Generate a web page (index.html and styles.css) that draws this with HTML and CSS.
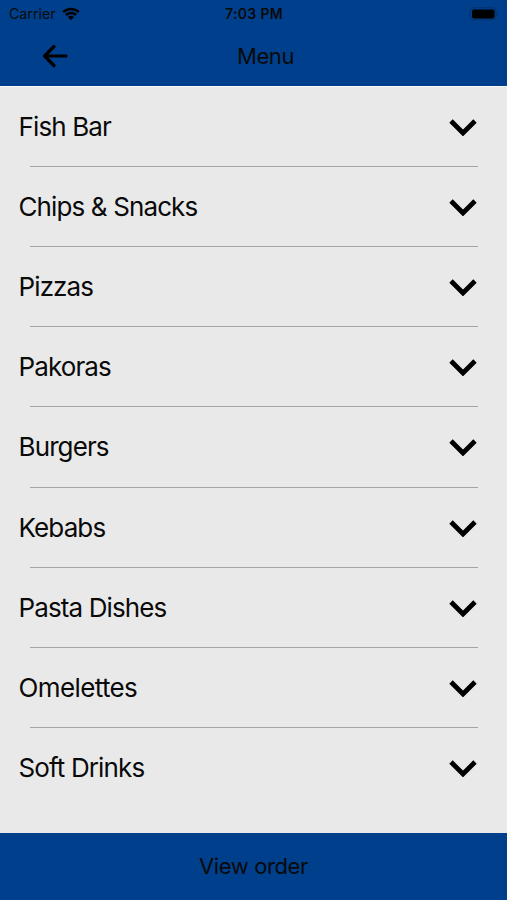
FILE: index.html
```html
<!DOCTYPE html>
<html lang="en">
<head>
<meta charset="utf-8">
<title>Menu</title>
<link rel="stylesheet" href="styles.css">
</head>
<body>
<div class="app">
  <header class="top">
    <div class="status">
      <div class="carrier"><span class="carrier-name">Carrier</span>
        <svg class="wifi" width="18" height="14" viewBox="0 0 18 14"><path d="M0.4 4.2a12.3 12.3 0 0 1 17.2 0l-1.6 1.8a10 10 0 0 0-14 0z"/><path d="M3.1 7.1a8.4 8.4 0 0 1 11.8 0l-1.7 1.8a6 6 0 0 0-8.4 0z"/><path d="M5.9 10a4.4 4.4 0 0 1 6.2 0L9 13.3z"/></svg>
      </div>
      <time class="clock">7:03 PM</time>
      <svg class="battery" width="30" height="14" viewBox="0 0 30 14"><rect x="1" y=".7" width="26" height="12.2" rx="3.4" fill="none" stroke="#000" stroke-opacity=".2"/><rect x="3" y="2.4" width="22.5" height="9" rx="2"/><path d="M28 5c1.5.6 1.5 3.4 0 4z" opacity=".25"/></svg>
    </div>
    <nav class="bar">
      <svg class="back" width="28" height="24" viewBox="0 0 28 24"><path d="M25 12H4M13 2.5L3.5 12l9.5 9.5"/></svg>
      <h1 class="title">Menu</h1>
    </nav>
  </header>
  <main class="list">
    <div class="row"><span class="label">Fish Bar</span><svg class="chevron" viewBox="0 0 28 18"><path d="M2 3l12 12L26 3"/></svg></div>
    <div class="row"><span class="label">Chips &amp; Snacks</span><svg class="chevron" viewBox="0 0 28 18"><path d="M2 3l12 12L26 3"/></svg></div>
    <div class="row"><span class="label">Pizzas</span><svg class="chevron" viewBox="0 0 28 18"><path d="M2 3l12 12L26 3"/></svg></div>
    <div class="row"><span class="label">Pakoras</span><svg class="chevron" viewBox="0 0 28 18"><path d="M2 3l12 12L26 3"/></svg></div>
    <div class="row"><span class="label">Burgers</span><svg class="chevron" viewBox="0 0 28 18"><path d="M2 3l12 12L26 3"/></svg></div>
    <div class="row"><span class="label">Kebabs</span><svg class="chevron" viewBox="0 0 28 18"><path d="M2 3l12 12L26 3"/></svg></div>
    <div class="row"><span class="label">Pasta Dishes</span><svg class="chevron" viewBox="0 0 28 18"><path d="M2 3l12 12L26 3"/></svg></div>
    <div class="row"><span class="label label-wide">Omelettes</span><svg class="chevron" viewBox="0 0 28 18"><path d="M2 3l12 12L26 3"/></svg></div>
    <div class="row"><span class="label">Soft Drinks</span><svg class="chevron" viewBox="0 0 28 18"><path d="M2 3l12 12L26 3"/></svg></div>
  </main>
  <footer class="order">View order</footer>
</div>
</body>
</html>
```
FILE: styles.css
```css
* { box-sizing: border-box; }
body { margin: 0; font-family: Inter, "Liberation Sans", sans-serif; color: #0a0a0a; }
.app { display: flex; flex-direction: column; height: 900px; background: #e9e9e9; }
.top { height: 86px; background: #003f8b; }
.status { display: grid; grid-template-columns: 1fr auto 1fr; align-items: center; height: 27px; padding: 0 8px 0 9px; }
.carrier { display: flex; align-items: center; gap: 6px; }
.carrier-name { font-size: 14.2px; }
.clock { font-size: 14px; font-weight: 600; letter-spacing: .35px; }
.battery { justify-self: end; }
.bar { display: grid; grid-template-columns: 1fr auto 1fr; align-items: center; height: 58px; padding: 0 17px 0 41px; }
.back { fill: none; stroke: #000; stroke-width: 3.2; stroke-linecap: round; stroke-linejoin: round; }
.title { margin: 0; font-size: 22px; font-weight: 400; letter-spacing: -.4px; }
.list { flex: 1; padding-top: .1px; border-top: 1px solid #f8f9fb; }
.row { display: flex; align-items: center; justify-content: space-between; height: 80.25px; padding: 0 30px 0 18.5px; background: linear-gradient(#a5a5a5, #a5a5a5) 30px 100% / 448px 1px no-repeat; }
.row:first-child { height: 79.5px; }
.row:last-child { background: none; }
.label { padding-bottom: 1px; font-size: 26px; letter-spacing: -.88px; }
.label-wide { letter-spacing: -.62px; }
.chevron { width: 28px; height: 18px; fill: none; stroke: #000; stroke-width: 4.8; }
.order { display: flex; align-items: center; justify-content: center; height: 67px; padding-bottom: 1px; background: #003f8b; font-size: 22px; letter-spacing: -.4px; }
```
